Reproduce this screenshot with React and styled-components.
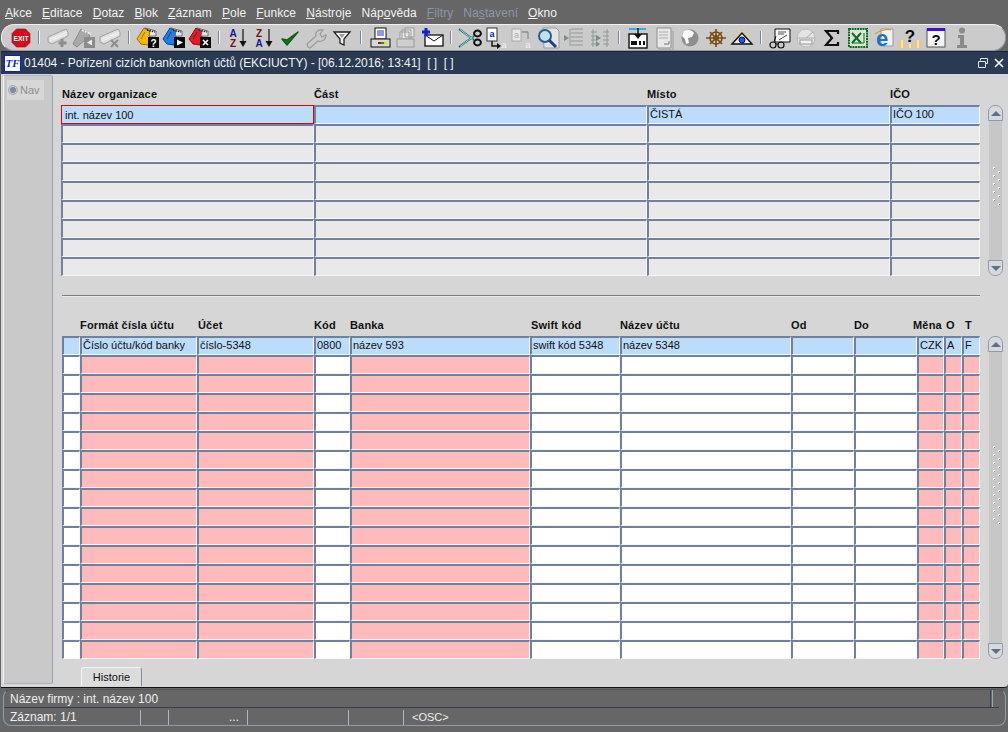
import React from "react";
import styled, { createGlobalStyle } from "styled-components";

const Global = createGlobalStyle`
  html, body { margin: 0; padding: 0; background: #666; }
  body { font-family: "Liberation Sans", Arial, sans-serif; font-size: 12px; }
`;

const Page = styled.div`
  width: 1008px; height: 732px; display: flex; flex-direction: column; background: #666; overflow: hidden;
`;
const MenuBar = styled.div`
  height: 24px; flex: none; display: flex; align-items: center; padding: 1px 0 0 5px; gap: 10px; box-sizing: border-box;
`;
const MenuItem = styled.span`
  font-size: 12px; letter-spacing: .08px; color: ${p => (p.$off ? "#8b97aa" : "#f2f2f2")};
  u { text-decoration: underline; text-underline-offset: 1px; }
`;
const Toolbar = styled.div`
  height: 27px; flex: none; margin: 0 2px 0 1px; padding-left: 7px; display: flex; align-items: center;
  background: #cbcbcb; border-radius: 13px; border-top: 1px solid #f0f0f0; border-right: 1px solid #8f9bb0;
  border-left: 1px solid #f0f0f0; border-bottom: 1px solid #8f9bb0; box-sizing: border-box;
`;
const Tool = styled.span`
  width: ${p => p.$w || 26}px; height: 24px; flex: none; display: flex; align-items: center; justify-content: center;
`;
const Sep = styled.span`
  width: 12px; flex: none; display: flex; justify-content: center;
  &::before { content: ""; width: 2px; height: 13px; background: #f4f4f4; border-left: 1px solid #7488a8; box-sizing: border-box; }
`;
const Win = styled.div`
  flex: 1; min-height: 0; display: flex; flex-direction: column; background: #d6d6d6;
  border-bottom: 1px solid #111; border-radius: 0 0 4px 0; margin-left: 1px;
`;
const TitleBar = styled.div`
  height: 23px; flex: none; background: #2a3a52; display: flex; align-items: center; padding: 0 3px; color: #f0f2f5;
  font-size: 12px; box-sizing: border-box; border-top: 1px solid #1a2536;
`;
const Logo = styled.span`
  width: 17px; height: 17px; flex: none; background: #fff; border: 1px solid #0a1fd0; box-sizing: border-box; color: #0a1fd0;
  font: italic bold 11px/15px "Liberation Serif", serif; text-align: center; margin-right: 3px;
`;
const TitleText = styled.span`flex: 1; white-space: pre; letter-spacing: -.04px;`;
const WinBtns = styled.span`display: flex; gap: 4px; align-items: center;`;
const Body = styled.div`flex: 1; min-height: 0; display: flex;`;
const Side = styled.div`
  width: 50px; flex: none; margin: 1px 0 3px 2px; background: #c9c9c9; border-left: 1px solid #f2f2f2; border-right: 1px solid #93a3bb;
  border-top: 1px solid #a8b4c6; border-bottom: 1px solid #a8b4c6; box-sizing: border-box; border-radius: 0 2px 2px 0;
`;
const NavTab = styled.div`
  margin: 4px 8px 0 3px; height: 20px; background: #d7d7d7; display: flex; align-items: center; gap: 2px;
  padding-left: 1px; color: #8d8d8d; font-size: 11px;
`;
const Radio = styled.span`
  width: 10px; height: 10px; border-radius: 50%; flex: none; background: #7f8a9a; border: 1px solid #aab3c0; box-sizing: border-box; box-shadow: inset 0 0 0 1px #c7ccd3;
`;
const Main = styled.div`flex: 1; min-width: 0; padding-left: 8px; display: flex; flex-direction: column;`;
const Section = styled.div`
  display: flex; margin-left: ${p => p.$left || 0}px; margin-top: ${p => p.$top || 0}px;
`;
const Grid = styled.div`
  display: grid; grid-template-columns: ${p => p.$cols}; grid-auto-rows: 19px; flex: none;
`;
const Head = styled.div`
  font-size: 11px; font-weight: bold; letter-spacing: .18px; color: #111; white-space: nowrap; height: 14px; line-height: 14px;
  padding-left: ${p => p.$pad || 0}px; margin-left: ${p => p.$shift || 0}px;
`;
const HeadRow = styled.div`
  display: grid; grid-template-columns: ${p => p.$cols}; margin-top: ${p => p.$top}px; margin-left: ${p => p.$left || 0}px; height: ${p => p.$h || 17}px;
`;
const Cell = styled.div`
  box-sizing: border-box; height: 19px; font-size: 11px; padding-left: ${p => (p.$cur ? 3 : 1)}px; color: #111; white-space: nowrap; overflow: hidden;
  padding-top: ${p => (p.$cur ? 1 : 0)}px;
  line-height: ${p => (p.$cur ? 16 : 15)}px;
  background: ${p => p.$bg};
  border-style: solid;
  border-width: ${p => (p.$cur ? "1px" : "2px 1px 1px 2px")};
  border-color: ${p => (p.$cur ? "#e00000" : "#6f819f #f6f6f6 #f6f6f6 #6f819f")};
`;
const Scroll = styled.div`
  display: flex; flex-direction: column; height: ${p => p.$h}px; width: 15px; margin-left: ${p => p.$gap}px;
`;
const ScrollBtn = styled.div`
  height: 16px; flex: none; background: #d9d9d9; border: 1px solid #8b9bb5; box-sizing: border-box; display: flex; align-items: center; justify-content: center;
  border-radius: ${p => (p.$up ? "7px 7px 0 0" : "0 0 7px 7px")};
  &::before { content: ""; border-left: 5px solid transparent; border-right: 5px solid transparent;
    ${p => (p.$up ? "border-bottom: 5px solid #5d6f8e;" : "border-top: 5px solid #5d6f8e;")} }
`;
const ScrollTrack = styled.div`
  flex: 1; margin: 0 1px; background: #c7c7c7; display: flex; align-items: center; justify-content: center; padding-bottom: ${p => p.$pad}px; box-sizing: border-box;
`;
const Divider = styled.div`
  height: 1px; background: #7d7d7d; margin: 19px 0 0 1px; width: 918px; box-shadow: 0 1px 0 #ececec;
`;
const TabBar = styled.div`height: 18px; margin-top: 8px; padding-left: 20px; display: flex;`;
const Tab = styled.div`
  width: 61px; height: 19px; box-sizing: border-box; background: #dcdcdc; border-left: 1px solid #f4f4f4; border-top: 1px solid #f4f4f4;
  border-right: 1px solid #7c8da8; border-radius: 3px 3px 0 0; text-align: center; font-size: 11px; line-height: 18px; color: #111;
`;
const Status = styled.div`
  height: 44px; flex: none; box-sizing: border-box; padding: 1px 2px 6px 3px; color: #eee; font-size: 12px;
`;
const StatusBox = styled.div`
  height: 100%; box-sizing: border-box; border: 1px solid #8f9cb0; border-radius: 8px; border-top-color: #555; display: flex; flex-direction: column;
`;
const StatusLine = styled.div`
  height: 18px; flex: none; display: flex; align-items: center; padding-left: 6px; box-sizing: border-box; border-bottom: 1px solid #333d4c; margin-right: 6px;
`;
const StatusGrow = styled.span`flex: 1;`;
const StatusPost = styled.span`width: 3px; height: 100%; border-left: 1px solid #3a4453; border-right: 1px solid #9aa5b6; box-sizing: border-box; margin-right: 6px;`;
const StatusCells = styled.div`
  flex: 1; display: grid; grid-template-columns: 137px 28px 79px 101px 55px 1fr; align-items: center; margin-top: 1px;
`;
const SCell = styled.div`
  height: 15px; line-height: 15px; padding-left: ${p => p.$pl || 6}px; border-right: ${p => (p.$end ? "none" : "1px solid #a9b4c4")}; text-align: ${p => (p.$right ? "right" : "left")};
  padding-right: ${p => (p.$right ? "8px" : 0)}; box-sizing: border-box; white-space: nowrap; font-size: ${p => (p.$small ? 11 : 12)}px;
`;

const Svg = ({ children, w = 24, h = 24 }) => (
  <svg width={w} height={h} viewBox={`0 0 ${w} ${h}`}>{children}</svg>
);
const Exit = () => (
  <Svg>
    <polygon points="7.5,3 16.5,3 21,7.5 21,16.5 16.5,21 7.5,21 3,16.5 3,7.5" fill="#d40d1e" stroke="#a00" strokeWidth=".6" />
    <text x="12" y="14.6" textAnchor="middle" fill="#fff" fontFamily="Liberation Sans" fontWeight="bold" fontSize="6.8">EXIT</text>
  </Svg>
);
const GhostFilm = ({ mark }) => (
  <Svg>
    <polygon points="2,11 20,3 22,6 22,10 6,18 2,16" fill="#dedede" stroke="#a0a0a0" />
    <path d="M4 13l17-7M4 15l17-7" stroke="#f5f5f5" />
    {mark === "plus" && <path d="M16 13v8M12.5 17h8" stroke="#8d8d8d" strokeWidth="3" />}
    {mark === "x" && <path d="M13 14l7 7M20 14l-7 7" stroke="#8d8d8d" strokeWidth="2" />}
  </Svg>
);
const GhostFolder = () => (
  <Svg>
    <polygon points="1,18 9,3 15,6 18,10 14,13 5,21" fill="#a9a9a9" stroke="#8a8a8a" />
    <path d="M10 4l9 4" stroke="#eee" strokeWidth="2" strokeDasharray="2 1" />
    <rect x="12" y="11" width="11" height="11" fill="#8b8b8b" />
    <polygon points="20,13.5 20,19.5 15,16.5" fill="#eee" />
  </Svg>
);
const ColorFolder = ({ c, c2, children }) => (
  <Svg>
    <polygon points="1,13 8,2 15,6 12,19 5,18" fill={c} stroke={c2} />
    <polygon points="9,2 20,5 20,10 13,10 14,5" fill="#e8e8e8" stroke="#555" strokeWidth=".8" />
    <path d="M11 4l8 2" stroke="#222" strokeWidth="1.5" strokeDasharray="1.5 1" />
    <path d="M5 13l4-7" stroke={c2} />
    <rect x="12" y="11" width="11" height="11" fill="#0a0a0a" />
    {children}
  </Svg>
);
const Sort = ({ a, b, c1, c2 }) => (
  <Svg>
    <text x="7" y="11" textAnchor="middle" fontFamily="Liberation Sans" fontWeight="bold" fontSize="10" fill={c1}>{a}</text>
    <text x="7" y="21" textAnchor="middle" fontFamily="Liberation Sans" fontWeight="bold" fontSize="10" fill={c2}>{b}</text>
    <path d="M17 3v14" stroke="#111" strokeWidth="1.2" />
    <polygon points="13.5,15 20.5,15 17,21" fill="#111" />
  </Svg>
);
const Check = () => (
  <Svg><path d="M4 13l5 6L20 6l-11 8z" fill="#0f7a1e" stroke="#0a5e15" strokeWidth="1.4" strokeLinejoin="round" /></Svg>
);
const Wrench = () => (
  <Svg><path d="M4 21l-1-3 9-8c-1-4 2-7 7-6l-3 4 2 3 4-2c0 5-4 7-8 6l-8 7z" fill="none" stroke="#9a9a9a" strokeWidth="1.2" /></Svg>
);
const Funnel = () => (
  <Svg><path d="M4 6h16l-6 7v6l-4-2v-4z" fill="#f4f4f4" stroke="#222" strokeWidth="1.3" /><path d="M9 8h6l-3 4z" fill="#9a9a9a" /></Svg>
);
const Printer = () => (
  <Svg>
    <rect x="7" y="2" width="11" height="11" fill="#fff" stroke="#111" />
    <path d="M9 5h7M9 7h7M9 9h7" stroke="#2230c0" />
    <rect x="3" y="13" width="19" height="8" fill="#d8d8d8" stroke="#111" />
    <rect x="10" y="16" width="3" height="2" fill="#d00" /><rect x="13" y="16" width="3" height="2" fill="#0a0" /><rect x="16" y="16" width="3" height="2" fill="#dd0" />
  </Svg>
);
const GhostPrint = () => (
  <Svg>
    <path d="M11 2h9v9h-9zM8 4h9v9H8zM6 6h9v8H6z" fill="#e8e8e8" stroke="#999" />
    <rect x="3" y="13" width="17" height="8" fill="#cfcfcf" stroke="#999" />
  </Svg>
);
const Mail = () => (
  <Svg>
    <rect x="5" y="9" width="18" height="11" fill="#fff" stroke="#111" strokeWidth="1.3" />
    <path d="M5 9l9 6 9-6" fill="none" stroke="#111" />
    <path d="M6 2v8M2 6h8" stroke="#1020d0" strokeWidth="3" />
  </Svg>
);
const Scissors = () => (
  <Svg>
    <path d="M1 3l15 11M1 21l15-11" stroke="#0d6f75" strokeWidth="2" />
    <path d="M2 3.5l13 10M2 20.5l13-10" stroke="#e8f2f2" strokeWidth=".7" />
    <ellipse cx="19.5" cy="7.5" rx="3.4" ry="3" fill="none" stroke="#111" strokeWidth="2" />
    <ellipse cx="19.5" cy="16.5" rx="3.4" ry="3" fill="none" stroke="#111" strokeWidth="2" />
  </Svg>
);
const CopyIc = () => (
  <Svg>
    <rect x="3" y="2" width="10" height="13" fill="#fff" stroke="#333" />
    <text x="8" y="11" textAnchor="middle" fontFamily="Liberation Sans" fontWeight="bold" fontSize="9" fill="#1020d0">a</text>
    <path d="M8 15v5h6" stroke="#111" strokeWidth="1.4" fill="none" />
    <polygon points="13,17 17,20 13,23" fill="#111" />
    <text x="20" y="22" textAnchor="middle" fontFamily="Liberation Sans" fontSize="9" fill="#f2f2f2">a</text>
  </Svg>
);
const PasteIc = () => (
  <Svg>
    <rect x="2" y="3" width="9" height="12" fill="#e9e9e9" stroke="#aaa" />
    <text x="6.5" y="12" textAnchor="middle" fontFamily="Liberation Sans" fontSize="9" fill="#aaa">a</text>
    <path d="M18 6v7M12 6h6" stroke="#8f8f8f" strokeWidth="1.3" fill="none" />
    <text x="18" y="22" textAnchor="middle" fontFamily="Liberation Sans" fontSize="9" fill="#f2f2f2">a</text>
  </Svg>
);
const Search = () => (
  <Svg>
    <path d="M7 2h13l3 3v17H8z" fill="#e4e4e4" stroke="#9a9a9a" />
    <circle cx="9" cy="10" r="6" fill="#bfe0f0" stroke="#2a5d8a" strokeWidth="2" />
    <path d="M13 14l7 7" stroke="#1c3f8f" strokeWidth="3" />
  </Svg>
);
const GhostList = ({ two }) => (
  <Svg>
    <path d={two ? "M5 3v18M19 3v18M3 6h6M3 10h6M3 14h6M3 18h6M15 6h6M15 10h6M15 14h6M15 18h6" : "M9 3h12M9 7h12M9 11h12M9 15h12M9 19h12M8 3v17"} stroke="#8f9a98" fill="none" />
    <polygon points={two ? "8,9 13,12 8,15" : "2,9 7,12 2,15"} fill="#7e8a88" />
    {two && <polygon points="8,15 12,18 8,21" fill="#7e8a88" />}
  </Svg>
);
const Form = () => (
  <Svg>
    <rect x="3" y="8" width="18" height="14" fill="#fff" stroke="#111" strokeWidth="1.4" />
    <path d="M3 3h17" stroke="#3fa9e0" strokeWidth="2" />
    <path d="M12 2v8" stroke="#111" strokeWidth="1.4" />
    <polygon points="8,8 16,8 12,13" fill="#111" />
    <path d="M5 15h6v4H5zM13 15h2v4h-2zM17 15h2v4h-2z" fill="#111" />
  </Svg>
);
const Doc = () => (
  <Svg>
    <path d="M5 2h14v20H5z" fill="#e8e8e8" stroke="#8f8f8f" />
    <path d="M7 6h9M7 9h9M7 12h9" stroke="#aaa" />
    <path d="M21 5v19H7" stroke="#9c9c9c" fill="none" />
    <path d="M12 18h5v-3" stroke="#777" fill="none" />
  </Svg>
);
const Globe = () => (
  <Svg>
    <circle cx="12" cy="12" r="8.5" fill="#8e8e8e" />
    <path d="M6 5c4-2 8-1 10 2l-2 4-4 1 1 5-3 1-1-5-3-3z" fill="#fafafa" />
  </Svg>
);
const Wheel = () => (
  <Svg>
    <g stroke="#7a4d10" strokeWidth="1.6" fill="none">
      <circle cx="12" cy="12" r="6" /><circle cx="12" cy="12" r="2" />
      <path d="M12 3v18M2 12h20M6 6l12 12M18 6L6 18" />
    </g>
  </Svg>
);
const Eye = () => (
  <Svg>
    <path d="M2 18L12 7l10 11z" fill="#f2f2f2" stroke="#111" strokeWidth="1.5" />
    <circle cx="12" cy="14" r="3" fill="#1060e0" stroke="#0a0a6a" />
    <path d="M12 3v2M6 5l1.5 2M18 5l-1.5 2M3 9l2 1M21 9l-2 1" stroke="#f0d000" />
  </Svg>
);
const Glasses = () => (
  <Svg>
    <path d="M7 3h15v13H7z" fill="#f8f8f8" stroke="#111" />
    <path d="M10 6h8M10 8h6M11 14l8-5" stroke="#555" />
    <circle cx="5" cy="19" r="3" fill="none" stroke="#111" strokeWidth="1.2" />
    <circle cx="13" cy="19" r="3" fill="none" stroke="#111" strokeWidth="1.2" />
    <path d="M8 18h2M6 16l2-6" stroke="#111" />
  </Svg>
);
const Gauge = () => (
  <Svg>
    <circle cx="12" cy="12" r="9" fill="#e3e3e3" stroke="#bbb" />
    <path d="M12 12l7-6M3 12h18" stroke="#aaa" />
    <rect x="6" y="14" width="12" height="4" fill="#f2f2f2" stroke="#999" />
  </Svg>
);
const Sigma = () => (
  <Svg><path d="M5 5h13v3M17 5H6l6 7-6 7h12v-3" fill="none" stroke="#111" strokeWidth="2.2" /></Svg>
);
const Excel = () => (
  <Svg>
    <rect x="3" y="3" width="18" height="18" fill="#d9e8d4" stroke="#0b6b22" strokeWidth="2" strokeDasharray="2 .7" />
    <path d="M6 7l9 10M15 7l-9 10" stroke="#0b6b22" strokeWidth="2" />
    <path d="M6 17h12M18 7v10" stroke="#0b6b22" />
  </Svg>
);
const IE = () => (
  <Svg>
    <path d="M9 3h12v17H9z" fill="#f2f2f2" stroke="#999" />
    <text x="10" y="20" textAnchor="middle" fontFamily="Liberation Sans" fontWeight="bold" fontSize="22" fill="#1b74c8">e</text>
    <path d="M3 8c5-4 13-5 16-4" stroke="#e88a10" fill="none" />
  </Svg>
);
const Help = () => (
  <Svg>
    <text x="12" y="16" textAnchor="middle" fontFamily="Liberation Sans" fontWeight="bold" fontSize="17" fill="#0a0a0a">?</text>
    <rect x="1" y="14" width="6" height="8" fill="#f0c27a" /><rect x="9" y="18" width="6" height="4" fill="#f0c27a" /><rect x="17" y="14" width="6" height="8" fill="#f0c27a" />
    <path d="M4 14v8M20 14v8M12 18v4" stroke="#fff" />
  </Svg>
);
const HelpWin = () => (
  <Svg>
    <rect x="3" y="3" width="18" height="18" fill="#f6f6f6" stroke="#555" />
    <rect x="3" y="2" width="18" height="3" fill="#4010d0" />
    <text x="12" y="19" textAnchor="middle" fontFamily="Liberation Sans" fontWeight="bold" fontSize="15" fill="#0a0a0a">?</text>
  </Svg>
);
const Info = () => (
  <Svg>
    <circle cx="12" cy="4.5" r="3" fill="#8a8a8a" />
    <path d="M8 9h6v10h3v3H7v-3h3v-7H8z" fill="#8a8a8a" />
  </Svg>
);

const menus = [
  ["", "A", "kce"], ["", "E", "ditace"], ["", "D", "otaz"], ["", "B", "lok"], ["", "Z", "áznam"], ["", "P", "ole"], ["", "F", "unkce"],
  ["", "N", "ástroje"], ["Náp", "o", "věda"], ["", "F", "iltry", 1], ["Na", "s", "tavení", 1], ["", "O", "kno"],
];

const badgeQ = <text x="17.5" y="20.5" textAnchor="middle" fontFamily="Liberation Sans" fontWeight="bold" fontSize="10" fill="#fff">?</text>;
const badgeP = <polygon points="15,13.5 21,16.5 15,19.5" fill="#fff" />;
const badgeX = <path d="M15 14l5 5M20 14l-5 5" stroke="#fff" strokeWidth="1.6" />;

const tools = [
  <Exit />, 0, <GhostFilm mark="plus" />, <GhostFolder />, <GhostFilm mark="x" />, 0,
  <ColorFolder c="#f5b800" c2="#b06a00">{badgeQ}</ColorFolder>,
  <ColorFolder c="#1f7fe8" c2="#0b3f9a">{badgeP}</ColorFolder>,
  <ColorFolder c="#e01b2a" c2="#8e0a12">{badgeX}</ColorFolder>, 0,
  <Sort a="A" b="Z" c1="#101a9a" c2="#7a1010" />, <Sort a="Z" b="A" c1="#7a1010" c2="#101a9a" />, <Check />, <Wrench />, <Funnel />, 0,
  <Printer />, <GhostPrint />, <Mail />, 0,
  <Scissors />, <CopyIc />, <PasteIc />, <Search />, <GhostList />, <GhostList two />, 0,
  <Form />, <Doc />, <Globe />, <Wheel />, <Eye />, 0,
  <Glasses />, <Gauge />, <Sigma />, <Excel />, <IE />, <Help />, <HelpWin />, <Info />,
];

const Grip = ({ n }) => (
  <svg width="13" height={n * 4 + 2} viewBox={`0 0 13 ${n * 4 + 2}`}>
    {Array.from({ length: n }).map((_, i) => (
      <g key={i}>
        <rect x={i % 2 ? 9 : 4} y={i * 4} width="2" height="2" fill="#f4f4f4" />
        <rect x={i % 2 ? 10 : 5} y={i * 4 + 1} width="1" height="1" fill="#8f8f8f" />
      </g>
    ))}
  </svg>
);

const SB = ({ h, n, pad, gap }) => (
  <Scroll $h={h} $gap={gap}>
    <ScrollBtn $up />
    <ScrollTrack $pad={pad}><Grip n={n} /></ScrollTrack>
    <ScrollBtn />
  </Scroll>
);

const topCols = "253px 333px 243px 90px";
const botCols = "18px 117px 117px 36px 180px 90px 171px 63px 63px 27px 18px 18px";
const BLUE = "#bcdcfb", PINK = "#ffbbbb", WHITE = "#ffffff", GREY = "#e9e9e9";

const topHeads = [["Název organizace", 1, 0], ["Část", 0, 0], ["Místo", 0, 0], ["IČO", 0, 0]];
const topFirst = ["int. název 100", "", "ČISTÁ", "IČO 100"];
const botHeads = [["", 0, 0], ["Formát čísla účtu", 0, 0], ["Účet", 1, 0], ["Kód", 0, 0], ["Banka", 0, 0], ["Swift kód", 1, 0], ["Název účtu", 0, 0], ["Od", 0, 0], ["Do", 0, 0], ["Měna", 0, -4], ["O", 2, 0], ["T", 3, 0]];
const botFirst = ["", "Číslo účtu/kód banky", "číslo-5348", "0800", "název 593", "swift kód 5348", "název 5348", "", "", "CZK", "A", "F"];
const pinkCols = [1, 2, 4, 9, 10, 11];

export default function App() {
  return (
    <Page>
      <Global />
      <MenuBar>
        {menus.map(([a, u, b, off], i) => (
          <MenuItem key={i} $off={off}>{a}<u>{u}</u>{b}</MenuItem>
        ))}
      </MenuBar>
      <Toolbar>
        {tools.map((t, i) => (t === 0 ? <Sep key={i} /> : <Tool key={i} $w={i === 0 ? 24 : 26}>{t}</Tool>))}
      </Toolbar>
      <Win>
        <TitleBar>
          <Logo>TF</Logo>
          <TitleText>01404 - Pořízení cizích bankovních účtů (EKCIUCTY) - [06.12.2016; 13:41]  [ ]  [ ]</TitleText>
          <WinBtns>
            <svg width="12" height="12" viewBox="0 0 12 12"><path d="M3.5 3.5V1.5h7v5H8.5M1.5 4.5h7v6h-7z" fill="none" stroke="#dfe4ea" /></svg>
            <svg width="12" height="12" viewBox="0 0 12 12"><path d="M2 2l8 8M10 2l-8 8" stroke="#f4f6f8" strokeWidth="1.7" /></svg>
          </WinBtns>
        </TitleBar>
        <Body>
          <Side>
            <NavTab><Radio />Nav</NavTab>
          </Side>
          <Main>
            <HeadRow $cols={topCols} $top={13}>
              {topHeads.map(([h, pad, shift]) => <Head key={h} $pad={pad} $shift={shift}>{h}</Head>)}
            </HeadRow>
            <Section $top={1}>
              <Grid $cols={topCols}>
                {Array.from({ length: 9 }).flatMap((_, r) =>
                  topFirst.map((t, c) => (
                    <Cell key={r + "-" + c} $bg={r === 0 ? BLUE : GREY} $cur={r === 0 && c === 0}>{r === 0 ? t : ""}</Cell>
                  ))
                )}
              </Grid>
              <SB h={171} n={10} pad={6} gap={8} />
            </Section>
            <Divider />
            <HeadRow $cols={botCols} $top={22} $h={18} $left={1}>
              {botHeads.map(([h, pad, shift], i) => <Head key={i} $pad={pad} $shift={shift}>{h}</Head>)}
            </HeadRow>
            <Section $left={1}>
              <Grid $cols={botCols}>
                {Array.from({ length: 17 }).flatMap((_, r) =>
                  botFirst.map((t, c) => (
                    <Cell key={r + "-" + c} $bg={r === 0 ? BLUE : pinkCols.includes(c) ? PINK : WHITE}>{r === 0 ? t : ""}</Cell>
                  ))
                )}
              </Grid>
              <SB h={323} n={20} pad={22} gap={8} />
            </Section>
            <TabBar><Tab>Historie</Tab></TabBar>
          </Main>
        </Body>
      </Win>
      <Status>
        <StatusBox>
          <StatusLine>Název firmy : int. název 100<StatusGrow /><StatusPost /></StatusLine>
          <StatusCells>
            <SCell>Záznam: 1/1</SCell>
            <SCell />
            <SCell $right>...</SCell>
            <SCell />
            <SCell />
            <SCell $end $small $pl={8}>&lt;OSC&gt;</SCell>
          </StatusCells>
        </StatusBox>
      </Status>
    </Page>
  );
}
